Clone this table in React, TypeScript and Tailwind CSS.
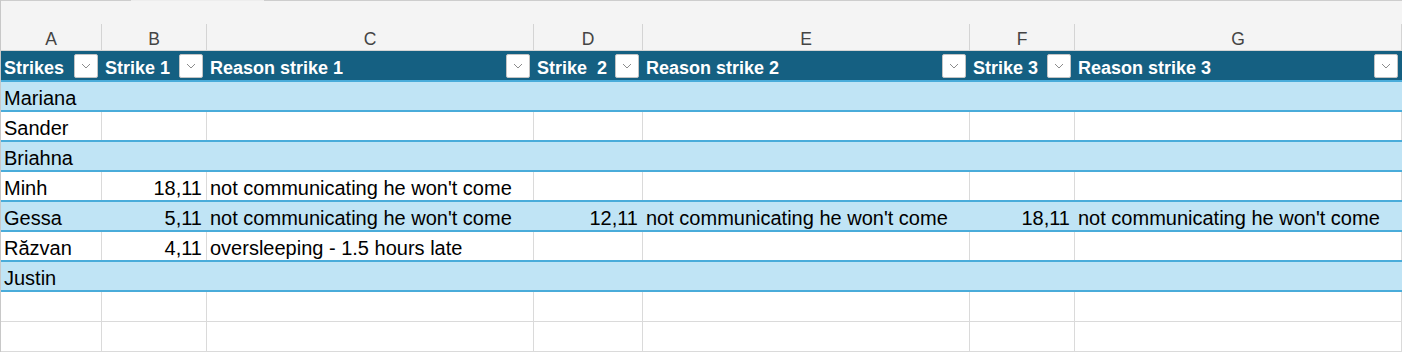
import React from 'react';

interface Row {
  name: string;
  band?: boolean;
  s1?: string;
  r1?: string;
  s2?: string;
  r2?: string;
  s3?: string;
  r3?: string;
}

const reason = "not communicating he won't come";

const rows: Row[] = [
  { name: 'Mariana', band: true },
  { name: 'Sander' },
  { name: 'Briahna', band: true },
  { name: 'Minh', s1: '18,11', r1: reason },
  { name: 'Gessa', band: true, s1: '5,11', r1: reason, s2: '12,11', r2: reason, s3: '18,11', r3: reason },
  { name: 'Răzvan', s1: '4,11', r1: 'oversleeping - 1.5 hours late' },
  { name: 'Justin', band: true },
];

const letters = ['A', 'B', 'C', 'D', 'E', 'F', 'G'];
const headers = ['Strikes', 'Strike 1', 'Reason strike 1', 'Strike  2', 'Reason strike 2', 'Strike 3', 'Reason strike 3'];

const grid = 'grid grid-cols-[101px_105px_327px_109px_327px_105px_327px]';

function FilterButton() {
  return (
    <span className="mr-[4px] flex h-[24px] w-[24px] shrink-0 items-center justify-center self-center rounded-[2px] border border-[#c4c4c4] bg-white">
      <svg width="10" height="6" viewBox="0 0 10 6" fill="none">
        <path d="M1 1L5 5L9 1" stroke="#8c8c8c" strokeWidth="1" />
      </svg>
    </span>
  );
}

function Cell({ text, right, band }: { text?: string; right?: boolean; band?: boolean }) {
  return (
    <div
      className={`flex h-[28px] items-end overflow-hidden whitespace-nowrap border-r pb-[2px] leading-[20px] ${
        band ? 'border-transparent' : 'border-[#dadada]'
      } ${right ? 'justify-end pr-[4px]' : 'pl-[3px]'}`}
    >
      {text}
    </div>
  );
}

export default function App() {
  return (
    <div className="relative h-[352px] w-[1402px] overflow-hidden border-l border-[#c8c8c8] bg-white font-['Liberation_Sans',Arial,sans-serif] text-[20px] text-black">
      {/* top edge */}
      <div className="flex h-[1px]">
        <div className="w-[130px] bg-[#cdcdcd]" />
        <div className="w-[133px] bg-[#ededed]" />
        <div className="flex-1 bg-[#cdcdcd]" />
      </div>

      {/* column letters */}
      <div className="h-[50px] border-b border-[#d4d4d4] bg-[#f4f4f4] pt-[23px]">
        <div className={grid}>
          {letters.map((l) => (
            <div
              key={l}
              className="h-[26px] overflow-hidden border-r border-[#d4d4d4] text-center text-[17.5px] leading-[30px] text-[#444]"
            >
              {l}
            </div>
          ))}
        </div>
      </div>

      {/* table header */}
      <div className={`${grid} h-[29px] bg-[#156082] text-[18px] font-bold text-white`}>
        {headers.map((h) => (
          <div key={h} className="flex items-end justify-between overflow-hidden">
            <span className="whitespace-pre pb-[2px] pl-[3px] leading-[20px]">{h}</span>
            <FilterButton />
          </div>
        ))}
      </div>

      {/* table rows */}
      {rows.map((r, i) => (
        <div
          key={r.name}
          className={`${grid} border-t-2 border-[#4aacda] ${r.band ? 'bg-[#c0e4f5]' : 'bg-white'} ${
            i === rows.length - 1 ? 'border-b-2' : ''
          }`}
        >
          <Cell text={r.name} band={r.band} />
          <Cell text={r.s1} right band={r.band} />
          <Cell text={r.r1} band={r.band} />
          <Cell text={r.s2} right band={r.band} />
          <Cell text={r.r2} band={r.band} />
          <Cell text={r.s3} right band={r.band} />
          <Cell text={r.r3} band={r.band} />
        </div>
      ))}

      {/* empty sheet rows */}
      {[0, 1].map((n) => (
        <div key={n} className={`${grid} border-b border-[#dadada]`}>
          {letters.map((l) => (
            <div key={l} className="h-[29px] border-r border-[#dadada]" />
          ))}
        </div>
      ))}
    </div>
  );
}
